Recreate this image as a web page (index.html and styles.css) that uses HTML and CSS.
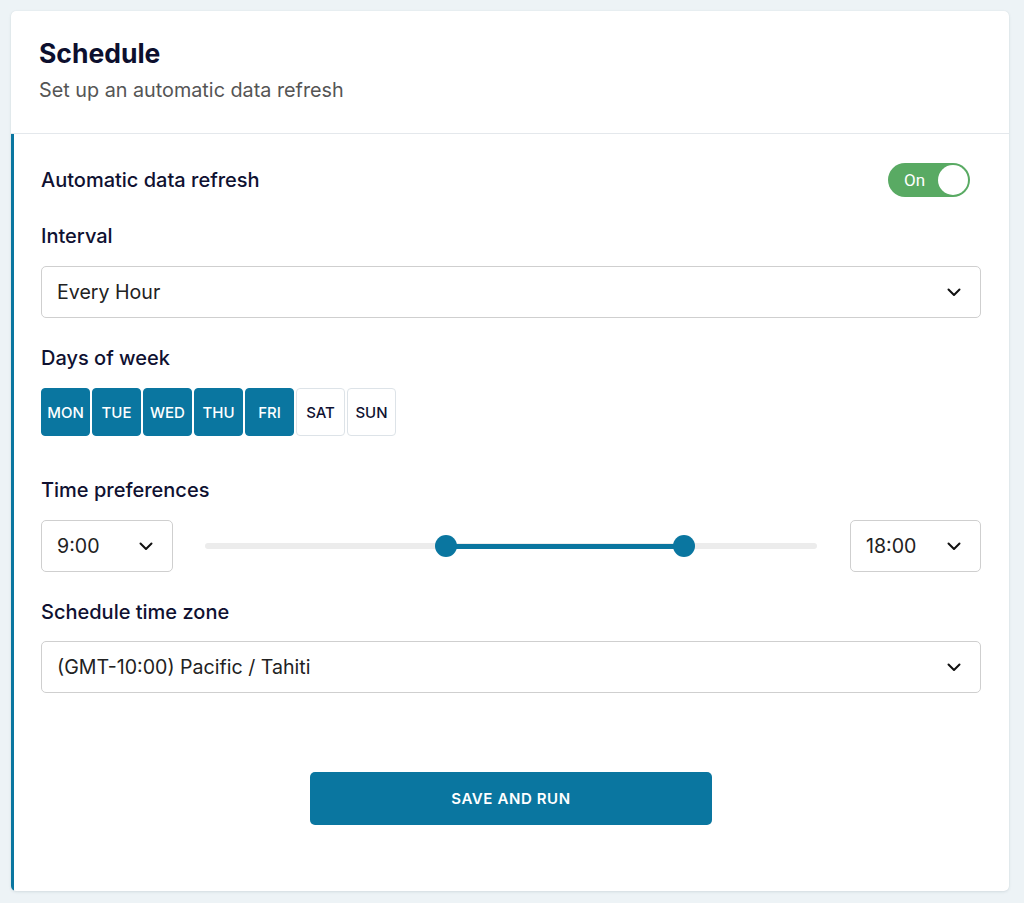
FILE: index.html
```html
<!DOCTYPE html>
<html lang="en">
<head>
<meta charset="utf-8">
<title>Schedule</title>
<link rel="stylesheet" href="styles.css">
</head>
<body>
<div class="card">
  <header class="card-head">
    <h1 class="title">Schedule</h1>
    <p class="subtitle">Set up an automatic data refresh</p>
  </header>
  <section class="card-body">
    <div class="toggle-row">
      <span class="label">Automatic data refresh</span>
      <div class="toggle"><span class="toggle-text">On</span><span class="knob"></span></div>
    </div>

    <div class="label mt-interval">Interval</div>
    <div class="select">
      <span>Every Hour</span>
      <svg class="chev" width="14" height="9" viewBox="0 0 14 9"><path d="M1.5 1.5 L7 7 L12.5 1.5" fill="none" stroke="#111" stroke-width="2" stroke-linecap="round" stroke-linejoin="round"/></svg>
    </div>

    <div class="label mt-group">Days of week</div>
    <div class="days">
      <span class="day on">MON</span>
      <span class="day on">TUE</span>
      <span class="day on">WED</span>
      <span class="day on">THU</span>
      <span class="day on">FRI</span>
      <span class="day">SAT</span>
      <span class="day">SUN</span>
    </div>

    <div class="label mt-time">Time preferences</div>
    <div class="time-row">
      <div class="select small">
        <span>9:00</span>
        <svg class="chev" width="14" height="9" viewBox="0 0 14 9"><path d="M1.5 1.5 L7 7 L12.5 1.5" fill="none" stroke="#111" stroke-width="2" stroke-linecap="round" stroke-linejoin="round"/></svg>
      </div>
      <div class="slider">
        <div class="track">
          <div class="range" style="left:39.4%;width:38.9%"></div>
          <span class="handle" style="left:39.4%"></span>
          <span class="handle" style="left:78.3%"></span>
        </div>
      </div>
      <div class="select small end">
        <span>18:00</span>
        <svg class="chev" width="14" height="9" viewBox="0 0 14 9"><path d="M1.5 1.5 L7 7 L12.5 1.5" fill="none" stroke="#111" stroke-width="2" stroke-linecap="round" stroke-linejoin="round"/></svg>
      </div>
    </div>

    <div class="label mt-group">Schedule time zone</div>
    <div class="select tz">
      <span>(GMT-10:00) Pacific / Tahiti</span>
      <svg class="chev" width="14" height="9" viewBox="0 0 14 9"><path d="M1.5 1.5 L7 7 L12.5 1.5" fill="none" stroke="#111" stroke-width="2" stroke-linecap="round" stroke-linejoin="round"/></svg>
    </div>

    <div class="actions">
      <button class="primary">SAVE AND RUN</button>
    </div>
  </section>
</div>
</body>
</html>
```

FILE: styles.css
```css
* { box-sizing: border-box; }
html, body { margin: 0; padding: 0; }
body {
  background: #edf3f6;
  font-family: Inter, Roboto, "Liberation Sans", sans-serif;
  color: #0f1131;
  padding: 11px 15px 12px 11px;
  min-height: 903px;
}
.card {
  background: #fff;
  border-radius: 5px;
  box-shadow: 0 1px 3px rgba(40, 70, 90, 0.12), 0 0 1px rgba(40, 70, 90, 0.1);
  height: 880px;
  overflow: hidden;
  display: flex;
  flex-direction: column;
}
.card-head {
  padding: 26px 28px 30px 28px;
  border-bottom: 1px solid #e4e8ec;
}
.title {
  margin: 0;
  font-size: 26.5px;
  line-height: 32px;
  font-weight: 700;
  color: #0d0f2e;
}
.subtitle {
  margin: 8px 0 0;
  font-size: 19.8px;
  line-height: 26px;
  color: #555;
  font-weight: 400;
}
.card-body {
  flex: 1;
  border-left: 3px solid #0a76a0;
  padding: 29px 28px 0 27px;
  display: flex;
  flex-direction: column;
}
.label {
  font-size: 20px;
  line-height: 28px;
  font-weight: 500;
  color: #0f1131;
}
.toggle-row {
  display: flex;
  align-items: center;
  justify-content: space-between;
  height: 34px;
  padding-right: 11px;
}
.toggle {
  width: 82px;
  height: 34px;
  border-radius: 17px;
  background: #59aa63;
  display: flex;
  align-items: center;
  justify-content: space-between;
  padding: 0 2px 0 16px;
}
.toggle-text {
  color: #fff;
  font-family: Roboto, sans-serif;
  font-size: 17px;
  font-weight: 400;
}
.knob {
  width: 30px;
  height: 30px;
  border-radius: 50%;
  background: #fff;
}
.mt-interval { margin-top: 25px; }
.mt-group { margin-top: 26px; }
.mt-time { margin-top: 40px; }
.select {
  margin-top: 16px;
  height: 52px;
  border: 1px solid #cfcfcf;
  border-radius: 5px;
  display: flex;
  align-items: center;
  justify-content: space-between;
  padding: 0 19px 0 15px;
  font-size: 19.6px;
  color: #222;
  background: #fff;
}
.select.tz { margin-top: 15px; }
.select.small {
  margin-top: 0;
  width: 132px;
  flex: none;
}
.select.small.end { width: 131px; }
.days {
  margin-top: 16px;
  display: flex;
  gap: 2px;
}
.day {
  width: 49px;
  height: 48px;
  border-radius: 4px;
  border: 1px solid #dde3e8;
  display: flex;
  align-items: center;
  justify-content: center;
  font-size: 15px;
  font-weight: 500;
  color: #0f1131;
  background: #fff;
}
.day.on {
  background: #0a76a0;
  border-color: #0a76a0;
  color: #fff;
}
.time-row {
  margin-top: 16px;
  display: flex;
  align-items: center;
  gap: 32px;
}
.slider {
  flex: 1;
  padding-right: 1px;
}
.track {
  position: relative;
  height: 6px;
  border-radius: 3px;
  background: #ececec;
}
.range {
  position: absolute;
  top: 0.5px;
  height: 5px;
  background: #0a76a0;
}
.handle {
  position: absolute;
  top: 50%;
  width: 22px;
  height: 22px;
  margin: -11px 0 0 -11px;
  border-radius: 50%;
  background: #0a76a0;
}
.actions {
  margin-top: 79px;
  display: flex;
  justify-content: center;
}
.primary {
  width: 402px;
  height: 53px;
  border: none;
  border-radius: 5px;
  background: #0a76a0;
  color: #fff;
  font-family: Inter, Roboto, sans-serif;
  font-size: 15px;
  font-weight: 600;
  letter-spacing: 0.6px;
}
```
